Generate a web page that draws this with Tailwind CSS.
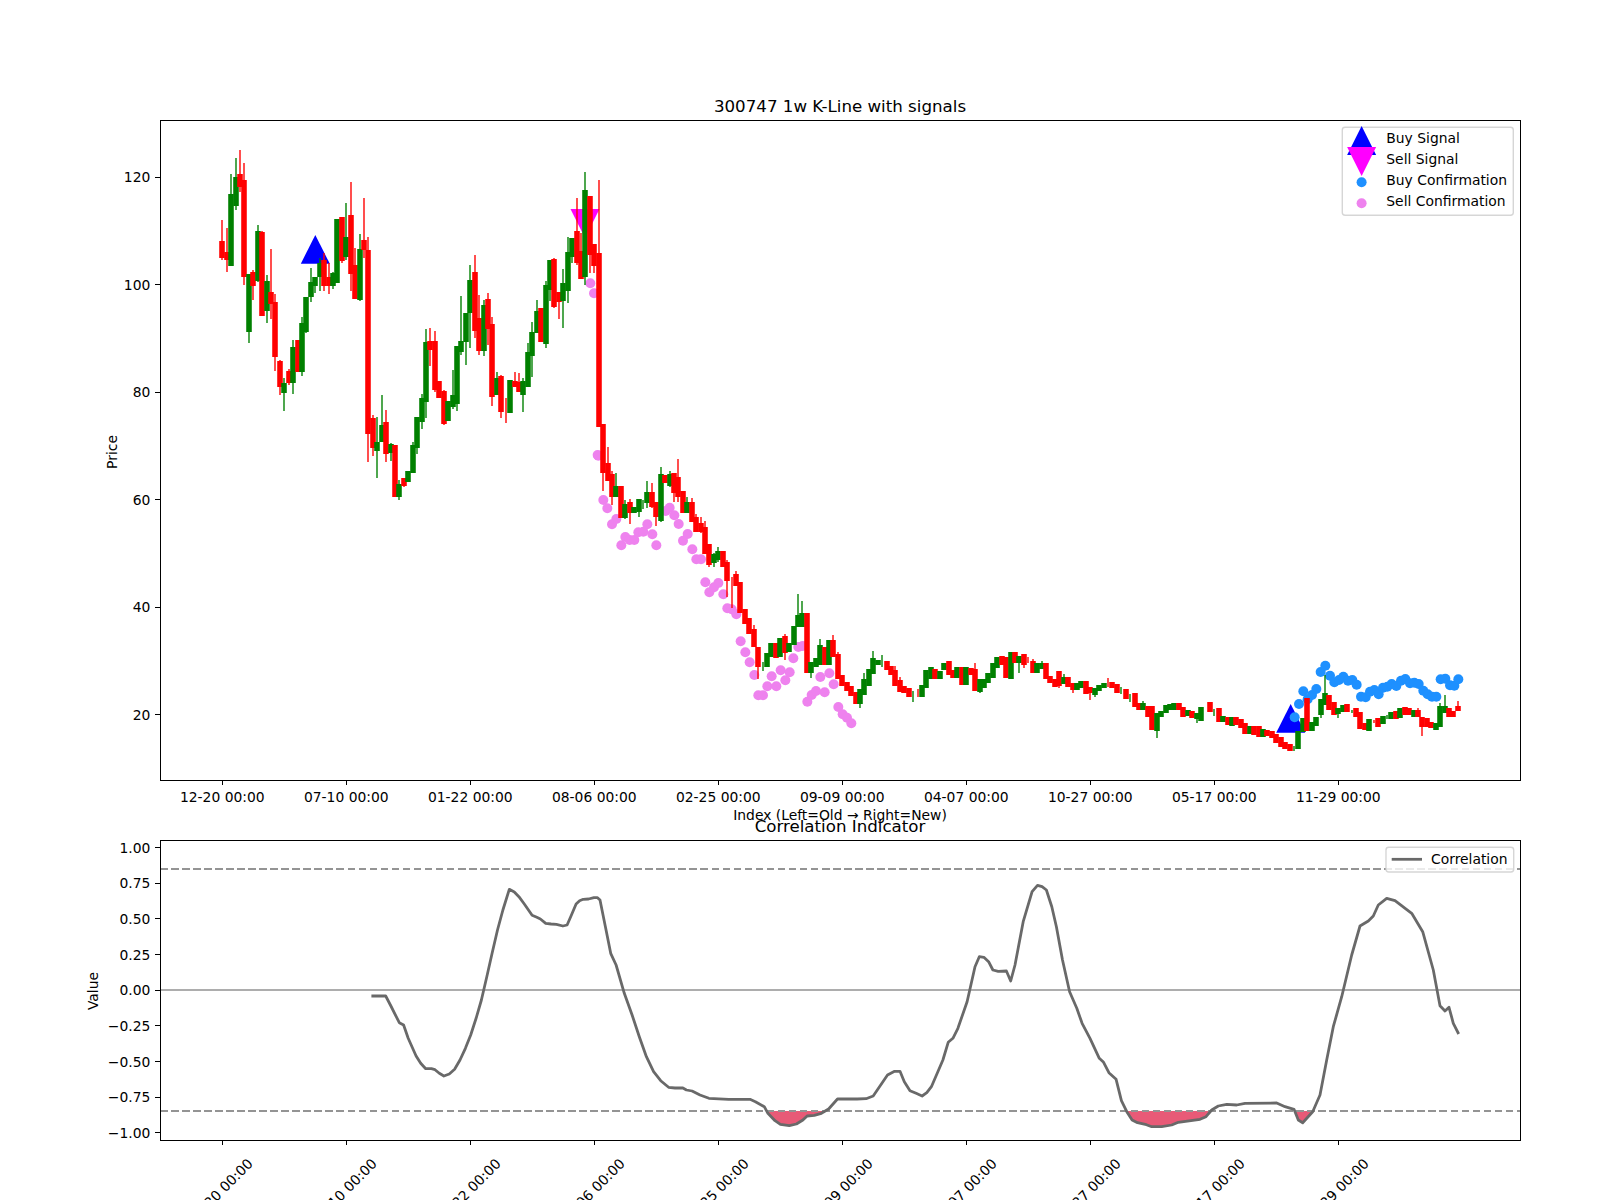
<!DOCTYPE html>
<html lang="en">
<head>
<meta charset="utf-8">
<title>300747 1w K-Line with signals</title>
<script src="https://cdn.jsdelivr.net/npm/@tailwindcss/browser@4"></script>
</head>
<body class="bg-white">
<main class="w-[1600px] h-[1200px] overflow-hidden bg-white">
<svg xmlns="http://www.w3.org/2000/svg" viewBox="0 0 1600 1200" class="block w-[1600px] h-[1200px] font-['DejaVu_Sans',sans-serif] text-[13.89px] fill-black">
  <defs><clipPath id="below"><rect x="160" y="1111" width="1360" height="29"/></clipPath></defs>

  <!-- price panel -->
  <g id="signals">
    <polygon points="315.3,235 300.8,263.7 329.8,263.7" fill="#0000ff"/>
    <polygon points="1290.7,704 1276.2,732.7 1305.2,732.7" fill="#0000ff"/>
    <polygon points="570.5,209 599.5,209 585,238" fill="#ff00ff"/>
  </g>
  <g id="dots"></g>
  <g id="candles"></g>
  <rect x="160.5" y="120.5" width="1360" height="660" fill="none" stroke="#000" stroke-width="1" shape-rendering="crispEdges"/>
  <path stroke="#000" stroke-width="1" shape-rendering="crispEdges" d="M222.5 780v5M346.5 780v5M470.5 780v5M594.5 780v5M718.5 780v5M842.5 780v5M966.5 780v5M1090.5 780v5M1214.5 780v5M1338.5 780v5M160 177.5h-5M160 284.5h-5M160 392.5h-5M160 499.5h-5M160 607.5h-5M160 714.5h-5"/>
  <g text-anchor="end">
    <text x="150.3" y="182.3">120</text><text x="150.3" y="289.8">100</text><text x="150.3" y="397.3">80</text><text x="150.3" y="504.8">60</text><text x="150.3" y="612.3">40</text><text x="150.3" y="719.8">20</text>
  </g>
  <g text-anchor="middle">
    <text x="222.3" y="801.5">12-20 00:00</text><text x="346.3" y="801.5">07-10 00:00</text><text x="470.3" y="801.5">01-22 00:00</text><text x="594.3" y="801.5">08-06 00:00</text><text x="718.3" y="801.5">02-25 00:00</text><text x="842.3" y="801.5">09-09 00:00</text><text x="966.3" y="801.5">04-07 00:00</text><text x="1090.3" y="801.5">10-27 00:00</text><text x="1214.3" y="801.5">05-17 00:00</text><text x="1338.3" y="801.5">11-29 00:00</text>
    <text x="840" y="820">Index (Left=Old → Right=New)</text>
    <text x="840" y="111.7" class="text-[16.67px]">300747 1w K-Line with signals</text>
    <text transform="translate(116.5 452) rotate(-90)">Price</text>
  </g>

  <!-- legend, price panel -->
  <rect x="1342.3" y="127.3" width="171" height="88" rx="2.8" fill="#fff" fill-opacity="0.8" stroke="#cccccc" stroke-opacity="0.8" stroke-width="1.39"/>
  <polygon points="1361.6,126 1347.1,155 1376.1,155" fill="#0000ff"/>
  <polygon points="1347.1,147 1376.1,147 1361.6,176" fill="#ff00ff"/>
  <circle cx="1361.6" cy="182.3" r="5" fill="#1e90ff"/>
  <circle cx="1361.6" cy="203.3" r="5" fill="#ee82ee"/>
  <text x="1386.3" y="143.3">Buy Signal</text><text x="1386.3" y="164.3">Sell Signal</text><text x="1386.3" y="185.3">Buy Confirmation</text><text x="1386.3" y="206.3">Sell Confirmation</text>

  <!-- correlation panel -->
  <path id="area" clip-path="url(#below)" fill="#e85a77"/>
  <path d="M160 869H1520M160 1111H1520" stroke="#949494" stroke-width="2" stroke-dasharray="7.7 3.33" fill="none" shape-rendering="crispEdges"/>
  <path d="M160 990H1520" stroke="#adadad" stroke-width="2" fill="none" shape-rendering="crispEdges"/>
  <path id="corr" fill="none" stroke="#696969" stroke-width="2.78" stroke-linejoin="round"/>
  <rect x="160.5" y="840.5" width="1360" height="300" fill="none" stroke="#000" stroke-width="1" shape-rendering="crispEdges"/>
  <path stroke="#000" stroke-width="1" shape-rendering="crispEdges" d="M222.5 1140v5M346.5 1140v5M470.5 1140v5M594.5 1140v5M718.5 1140v5M842.5 1140v5M966.5 1140v5M1090.5 1140v5M1214.5 1140v5M1338.5 1140v5M160 847.5h-5M160 883.5h-5M160 918.5h-5M160 954.5h-5M160 990.5h-5M160 1025.5h-5M160 1061.5h-5M160 1097.5h-5M160 1132.5h-5"/>
  <g text-anchor="end">
    <text x="150.3" y="852.8">1.00</text><text x="150.3" y="888.3">0.75</text><text x="150.3" y="924">0.50</text><text x="150.3" y="959.6">0.25</text><text x="150.3" y="995.3">0.00</text><text x="150.3" y="1031">−0.25</text><text x="150.3" y="1066.7">−0.50</text><text x="150.3" y="1102.3">−0.75</text><text x="150.3" y="1137.7">−1.00</text>
  </g>
  <g text-anchor="middle">
    <text x="840" y="831.7" class="text-[16.67px]">Correlation Indicator</text>
    <text transform="translate(97.5 991) rotate(-90)">Value</text>
    <text transform="translate(220.3 1191) rotate(-45)" y="5">12-20 00:00</text>
    <text transform="translate(344.3 1191) rotate(-45)" y="5">07-10 00:00</text>
    <text transform="translate(468.3 1191) rotate(-45)" y="5">01-22 00:00</text>
    <text transform="translate(592.3 1191) rotate(-45)" y="5">08-06 00:00</text>
    <text transform="translate(716.3 1191) rotate(-45)" y="5">02-25 00:00</text>
    <text transform="translate(840.3 1191) rotate(-45)" y="5">09-09 00:00</text>
    <text transform="translate(964.3 1191) rotate(-45)" y="5">04-07 00:00</text>
    <text transform="translate(1088.3 1191) rotate(-45)" y="5">10-27 00:00</text>
    <text transform="translate(1212.3 1191) rotate(-45)" y="5">05-17 00:00</text>
    <text transform="translate(1336.3 1191) rotate(-45)" y="5">11-29 00:00</text>
  </g>
  <rect x="1386" y="847.3" width="127.7" height="24.7" rx="2.8" fill="#fff" fill-opacity="0.8" stroke="#cccccc" stroke-opacity="0.8" stroke-width="1.39"/>
  <path d="M1391.7 859.3H1422" stroke="#696969" stroke-width="2.78"/>
  <text x="1431" y="864.3">Correlation</text>
</svg>
</main>
<script>
const NS='http://www.w3.org/2000/svg';
const cg=document.getElementById('candles');
let idx=0;
function el(p,n,a){const e=document.createElementNS(NS,n);for(const k in a)e.setAttribute(k,a[k]);p.appendChild(e);}
function candles(s,y0){
  s.trim().split(/\s+/).forEach(t=>{
    const col=t[0]==='r'?'#ff0000':'#008000';
    const v=t.slice(1).split(',').map(Number);
    const a=v[0],b=v[1],h=v[2]===undefined?a:v[2],l=v[3]===undefined?b:v[3];
    const x=Math.round(222.3+idx*124/28);
    el(cg,'path',{d:`M${x} ${Math.round(y0+h/3)}V${Math.round(y0+l/3)}`,stroke:col,'stroke-width':1.39});
    if(b>a){const yt=Math.round(y0+a/3),yb=Math.round(y0+b/3);el(cg,'rect',{x:x-2.78,y:yt,width:5.56,height:yb-yt,fill:col});}
    idx++;
  });
}
candles(`r424,473,360,480 r457,479,384,516 g281,499,222,499 g232,317,175,330 r223,262,150,276 r241,530,189,555 g523,695,523,728 r515,557,510,600 g394,542,376,545 r396,647,392,647
g544,632,525,669 r575,612,447,657 r607,770,582,812 r784,862,780,885 g850,878,835,933 r814,850,808,855 g742,848,720,882 r721,815 g670,815,652,828 g592,695,592,700
g545,592,503,605 g530,557,530,580 g490,530,475,573 r480,558,460,573 r530,558,490,582 g520,558,515,567 g358,550,358,550 r352,483,352,490 g412,470,308,480 r346,523,245,573
r496,598,445,598 g448,600,403,602 r421,450,294,473 r451,1003,411,1085 r954,1045,945,1068 g1025,1054,951,1134 g976,1027,885,1027 r967,1062,930,1085 g1033,1060,1030,1083 r1036,1192
g1153,1190,1140,1200 r1135,1158,1135,1160 g1114,1145 g1034,1120,1026,1120 g952,1043,952,1062 g895,967,882,987 g727,907,687,953 r724,750,684,797 r724,870,693,875 r844,895
r873,972,870,975 g904,962 g886,920,810,927 g739,913,739,932 g724,755,587,765 g640,725,640,795 g541,640,495,743 r517,692,465,713 r655,754,585,766 g616,752,600,767
r598,688,578,735 r673,892,652,918 g835,886,815,886 r829,935,825,953 r930,930,895,968 g841,940 r842,860,815,862 r846,875,818,875 g844,884,835,935 g755,860,730,860
g697,767,667,832 g634,700,600,700 r625,725 g556,733,543,745 g481,570,481,602 r478,620,475,623 r577,607,577,657 g550,604,508,684 g455,572,410,608 g415,470,415,490
r394,488,294,495 r452,538,400,538 g270,530,215,555 r289,466,289,518 r433,497,433,520 r460,982,240,982`,100);
candles(`r73,218,73,272 r190,242,140,242 r223,290,214,315 g259,290,220,290 r259,355 g313,355,300,358 r305,338,297,372 g320,338 g298,335,298,350 g310,310,300,328
g275,310,243,325 r275,320,250,325 r305,352,305,378 g223,362,200,365 r226,250 g223,257,213,262 r220,280,220,305 r232,290,177,305 r272,338 g305,338,290,340
r305,365,295,365 r350,395,342,395 r370,395,350,400 r380,462,362,462 r433,495,433,500 g463,490,460,500 g452,480,440,485 r452,500 r487,542,480,590 r580,580,530,625
r523,558,513,558 r547,640 r628,673 r655,703 r688,742,675,742 r740,802,740,838 g800,800,785,812 g760,800 g730,770 r730,775
g713,770 r708,758,703,780 g730,755 g677,735 g645,682,582,682 g640,680,602,680 r640,820 g787,818,787,833 g775,800 g734,795,717,795
r740,795 g721,795 r721,770,705,770 r762,838,755,838 r824,858 r845,872 r857,887 r875,913 g868,913,868,925 g838,886,820,886
g808,858 g775,822,753,822 g780,796 g785,785,765,800 r782,810 r798,825 r810,857,798,857 r840,875,830,875 r858,880 r865,890
g888,888,872,905 r880,880,868,892 g855,892 g810,865 g800,838 r808,838 g812,838 g788,810 r782,825 r810,835
g800,835 r800,855 g800,855 r803,825 r808,872,790,872 g838,875,838,878 g838,865 g818,850 g788,835 g772,805`,400);
candles(`r168,195 r172,235 g157,237 r155,188 g168,188,168,218 r162,195,162,205 r180,180,170,188 r183,220,178,220 g190,220 g190,208,183,208
r188,238 r227,250 r238,260 r212,258,212,265 g232,252,222,252 r232,262 r250,270,250,280 g248,270 g244,265 r244,282
r262,280,262,300 g265,285,265,292 g255,272 g248,265 r250,250,235,262 r246,265 r252,280 g272,272,262,282 r268,296 g295,295,283,305
r278,322 r308,330 g308,330,303,330 r318,350 r318,390 g340,392,340,415 g332,352 g315,340 g313,330 g308,330
r308,330 r320,352 g330,348 r333,355 g340,358,340,368 g322,362`,600);
candles(`g203,203 r187,215 g215,215,207,228 r205,245 g227,245 r230,255 g232,257 r232,255 r238,265 r250,282
g257,282 r257,285 r258,290 g268,290 r270,288 r272,295 r282,308 r292,320 r305,328 r312,332
g325,325,318,332 g273,328 g235,275 r175,272 g245,272 g230,258 g178,225,178,233 g160,195,105,195 r165,210 r185,225
g205,222,205,233 g195,215 r193,217 g215,215,210,218 r203,230 r215,268 r250,270 g238,272 r245,245,240,250 r233,260
g227,252 g232,232,225,238 g215,238 r212,237 g205,235 r200,225 r205,225 g210,230 r210,230,205,230 r230,262,230,288
r235,260 r245,265 g250,270 g198,262,190,262 g198,220,165,220 r203,232 r213,232 r197,213,183,213`,640);

const dg=document.getElementById('dots');
const sell1=[[1321,550],[1332,580],[1345,1067]];
sell1.forEach(p=>el(dg,'circle',{cx:150+p[0]/3,cy:100+p[1]/3,r:5,fill:'#ee82ee'}));
[[293,165],[310,300],[322,325],[336,373],[349,357],[364,436],[376,411],[389,420],[403,420],[415,397],[430,395],[442,373],[457,403],[469,436],[497,333],[509,323],[523,346],[536,372],[549,422],[563,402],[577,448],[589,478],[603,478],[616,547],[628,577],[642,562],[655,549],[670,583],[682,625],[695,628],[709,643],[722,724],[736,757],[749,787],[763,825],[775,886],[789,886],[802,859],[815,829],[829,859],[842,811],[856,841],[869,817],[880,775],[895,741],[908,738],[922,905],[935,885],[948,873],[961,831],[974,877],[988,820],[1001,853],[1015,921],[1028,943],[1041,953],[1054,970]]
.forEach(p=>el(dg,'circle',{cx:500+p[0]/3,cy:400+p[1]/3,r:5,fill:'#ee82ee'}));
[[284,232],[297,192],[310,154],[323,178],[336,165],[349,147],[362,96],[376,77],[390,107],[403,127],[417,120],[430,110],[444,122],[457,120],[470,134],[483,170],[497,172],[510,155],[523,150],[536,163],[549,143],[562,140],[575,132],[589,138],[603,122],[616,117],[630,130],[643,128],[656,132],[670,152],[683,163],[696,170],[709,170],[722,118],[736,116],[750,136],[763,137],[775,118]]
.forEach(p=>el(dg,'circle',{cx:1200+p[0]/3,cy:640+p[1]/3,r:5,fill:'#1e90ff'}));

const z6=[[872,558],[912,558],[925,585],[950,638],[962,645],[975,685],[997,738],[1010,760],[1024,776],[1040,776],[1050,779],[1062,790],[1075,798],[1090,792],[1105,778],[1120,750],[1135,715],[1150,675],[1165,625],[1180,570],[1195,500],[1210,430],[1225,360],[1240,300],[1258,238],[1272,246],[1285,260],[1300,282],[1322,316],[1335,322],[1345,327],[1360,340],[1375,342],[1390,343],[1408,348],[1420,345],[1430,320],[1445,282],[1455,272],[1465,268],[1480,267],[1495,263],[1505,263]];
const z7=[[0,270],[15,350],[30,430],[45,465],[68,550],[90,615],[110,680],[130,740],[150,785],[170,812],[192,832],[210,834],[232,834],[242,840],[258,843],[280,855],[305,865],[360,868],[420,868],[435,875],[460,890],[470,910],[490,932],[505,943],[530,947],[550,942],[568,930],[580,918],[600,916],[620,910],[640,897],[665,867],[720,867],[745,866],[765,858],[805,795],[825,784],[840,784],[852,815],[868,842],[885,850],[902,858],[915,848],[928,830],[960,750],[975,697],[988,685],[1002,655],[1028,575],[1050,470],[1062,440],[1075,442],[1088,455],[1100,480],[1115,484],[1138,483],[1150,513],[1162,465],[1185,335],[1210,245],[1225,226],[1238,230],[1250,240],[1265,290],[1278,350],[1295,450],[1315,545],[1335,595],[1350,640],[1372,685],[1398,745],[1410,757],[1425,788],[1445,808],[1460,872],[1475,905],[1490,930],[1505,938],[1530,944]];
const z8=[[155,950],[185,950],[215,945],[235,937],[300,928],[318,920],[335,900],[355,888],[380,883],[410,885],[435,880],[530,879],[555,890],[582,898],[595,930],[608,938],[638,905],[660,855],[680,750],[700,650],[725,560],[755,435],[780,348],[805,333],[820,318],[835,285],[860,265],[885,272],[935,310],[968,365],[1000,480],[1020,587],[1035,603],[1047,592],[1060,640],[1076,672]];
const pts=[...z6.map(p=>[60+p[0]/2.8,810+p[1]/3]),...z7.map(p=>[600+p[0]/2.8,810+p[1]/3]),...z8.map(p=>[1100+p[0]/3,810+p[1]/3])];
const d='M'+pts.map(p=>p[0].toFixed(1)+' '+p[1].toFixed(1)).join('L');
document.getElementById('corr').setAttribute('d',d);
document.getElementById('area').setAttribute('d',d+`L${pts[pts.length-1][0].toFixed(1)} 1111L${pts[0][0].toFixed(1)} 1111Z`);
</script>
</body>
</html>
